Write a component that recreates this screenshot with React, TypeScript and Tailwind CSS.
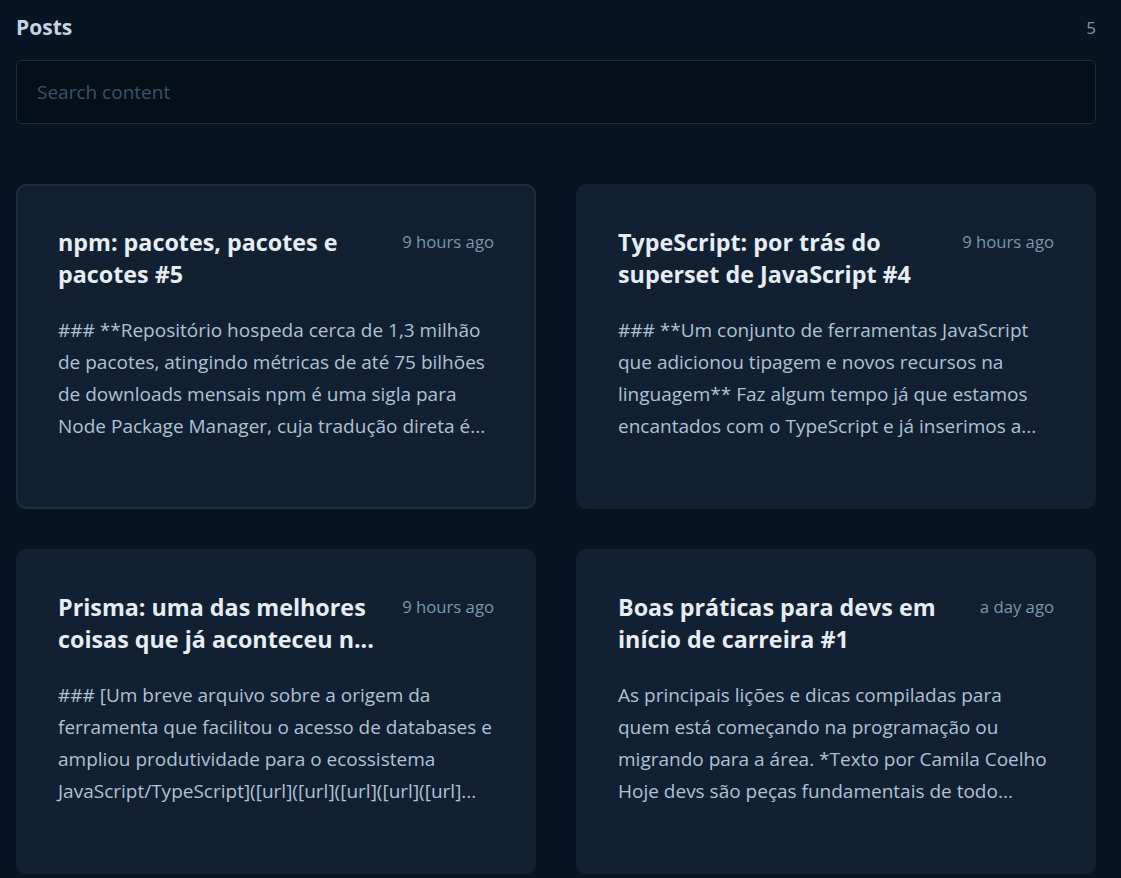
import React from "react";

type Post = {
  title: string[];
  time: string;
  body: string[];
  active?: boolean;
};

const posts: Post[] = [
  {
    title: ["npm: pacotes, pacotes e", "pacotes #5"],
    time: "9 hours ago",
    body: [
      "### **Repositório hospeda cerca de 1,3 milhão",
      "de pacotes, atingindo métricas de até 75 bilhões",
      "de downloads mensais npm é uma sigla para",
      "Node Package Manager, cuja tradução direta é...",
    ],
    active: true,
  },
  {
    title: ["TypeScript: por trás do", "superset de JavaScript #4"],
    time: "9 hours ago",
    body: [
      "### **Um conjunto de ferramentas JavaScript",
      "que adicionou tipagem e novos recursos na",
      "linguagem** Faz algum tempo já que estamos",
      "encantados com o TypeScript e já inserimos a...",
    ],
  },
  {
    title: ["Prisma: uma das melhores", "coisas que já aconteceu n..."],
    time: "9 hours ago",
    body: [
      "### [Um breve arquivo sobre a origem da",
      "ferramenta que facilitou o acesso de databases e",
      "ampliou produtividade para o ecossistema",
      "JavaScript/TypeScript]([url]([url]([url]([url]([url]...",
    ],
  },
  {
    title: ["Boas práticas para devs em", "início de carreira #1"],
    time: "a day ago",
    body: [
      "As principais lições e dicas compiladas para",
      "quem está começando na programação ou",
      "migrando para a área. *Texto por Camila Coelho",
      "Hoje devs são peças fundamentais de todo...",
    ],
  },
];

function PostCard({ post }: { post: Post }) {
  return (
    <div
      className={
        "h-[325px] overflow-hidden rounded-[10px] border-2 bg-[#112131] px-10 pt-10 " +
        (post.active ? "border-[#1C2F41]" : "border-transparent")
      }
    >
      <div className="flex items-start justify-between gap-4">
        <h2 className="text-[23.3px] font-bold leading-8 text-[#E7EDF4]">
          {post.title.map((l, i) => (
            <span key={i} className="block whitespace-nowrap">
              {l}
            </span>
          ))}
        </h2>
        <span className="whitespace-nowrap text-[16.7px] leading-8 text-[#7B96B2]">
          {post.time}
        </span>
      </div>
      <p className="mt-6 text-[19px] leading-8 text-[#AFC2D4]">
        {post.body.map((l, i) => (
          <span key={i} className="block whitespace-nowrap">
            {l}
          </span>
        ))}
      </p>
    </div>
  );
}

export default function App() {
  return (
    <div className="min-h-screen bg-[#071422] pl-4 pr-[25px] pt-[14px] pb-10 font-['Open_Sans',sans-serif]">
      <div className="flex h-7 items-center justify-between">
        <h1 className="text-[21px] font-bold text-[#C4D4E3]">Posts</h1>
        <span className="text-[17px] text-[#7B96B2]">5</span>
      </div>
      <input
        type="text"
        placeholder="Search content"
        className="mt-[18px] block h-16 w-full rounded-md border border-[#1C2F41] bg-[#040F1A] px-5 text-[19px] text-[#C4D4E3] outline-none placeholder:text-[#3A536B]"
      />
      <div className="mt-[60px] grid grid-cols-2 gap-x-10 gap-y-10">
        {posts.map((p, i) => (
          <PostCard key={i} post={p} />
        ))}
      </div>
    </div>
  );
}
